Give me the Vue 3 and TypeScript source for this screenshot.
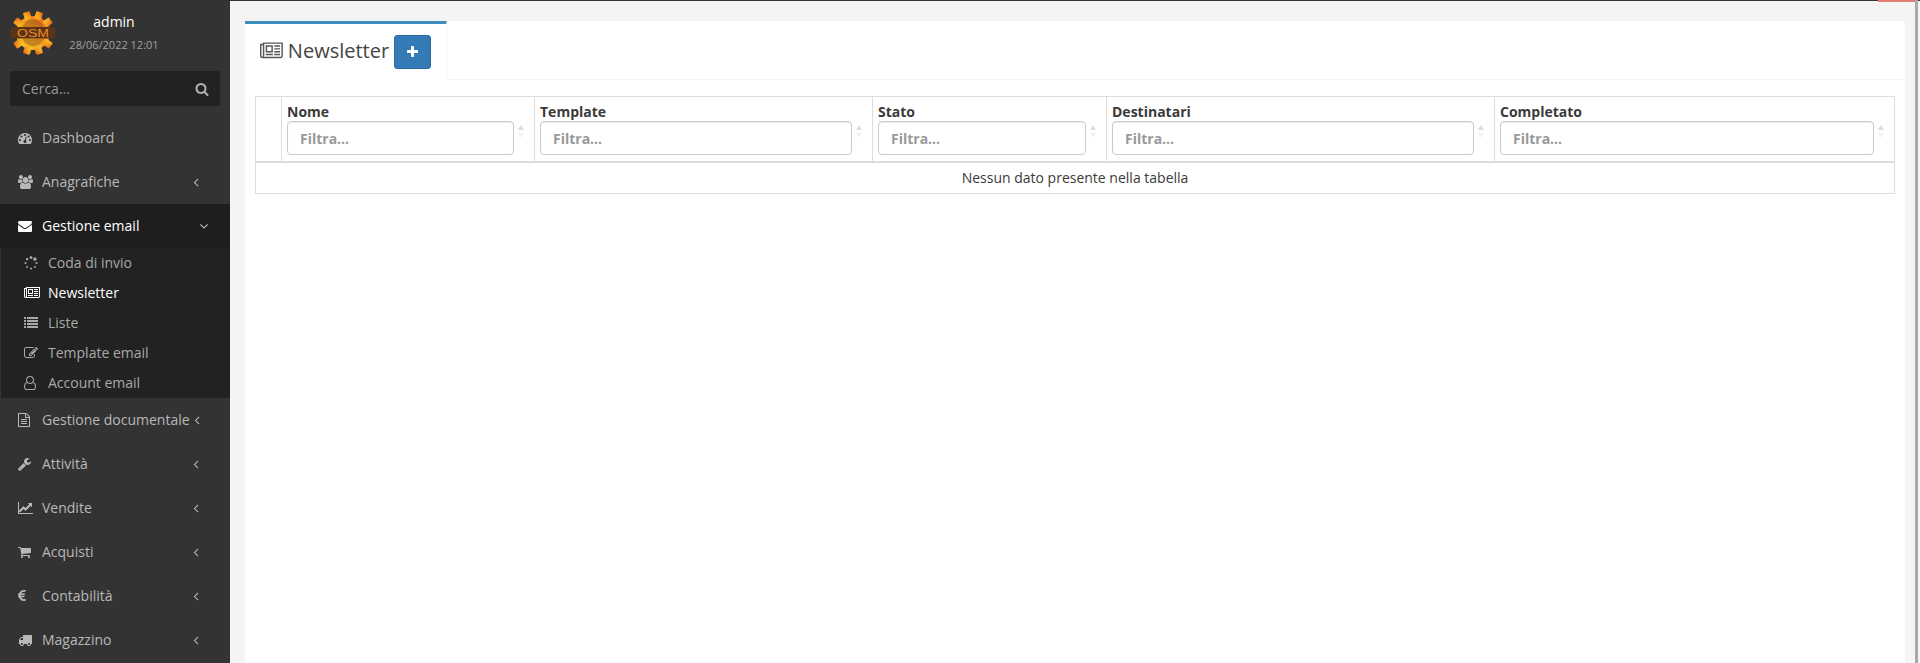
<script setup lang="ts">
interface Glyph { w: number; x?: number; d: string }

const icons: Record<string, Glyph> = {
  search: { w: 1792, d: 'M1216 832q0-185-131.5-316.5t-316.5-131.5-316.5 131.5-131.5 316.5 131.5 316.5 316.5 131.5 316.5-131.5 131.5-316.5zm512 832q0 52-38 90t-90 38q-54 0-90-38l-343-342q-179 124-399 124-143 0-273.5-55.5t-225-150-150-225-55.5-273.5 55.5-273.5 150-225 225-150 273.5-55.5 273.5 55.5 225 150 150 225 55.5 273.5q0 220-124 399l343 343q37 37 37 90z' },
  dashboard: { w: 1792, d: 'M384 1152q0-53-37.5-90.5t-90.5-37.5-90.5 37.5-37.5 90.5 37.5 90.5 90.5 37.5 90.5-37.5 37.5-90.5zm192-448q0-53-37.5-90.5t-90.5-37.5-90.5 37.5-37.5 90.5 37.5 90.5 90.5 37.5 90.5-37.5 37.5-90.5zm428 481l101-382q6-26-7.5-48.5t-38.5-29.5-48 6.5-30 39.5l-101 382q-60 5-107 43.5t-63 98.5q-20 77 20 146t117 89 146-20 89-117q16-60-6-117t-72-91zm660-33q0-53-37.5-90.5t-90.5-37.5-90.5 37.5-37.5 90.5 37.5 90.5 90.5 37.5 90.5-37.5 37.5-90.5zm-640-640q0-53-37.5-90.5t-90.5-37.5-90.5 37.5-37.5 90.5 37.5 90.5 90.5 37.5 90.5-37.5 37.5-90.5zm448 192q0-53-37.5-90.5t-90.5-37.5-90.5 37.5-37.5 90.5 37.5 90.5 90.5 37.5 90.5-37.5 37.5-90.5zm320 448q0 261-141 483-19 29-54 29h-1402q-35 0-54-29-141-221-141-483 0-182 71-348t191-286 286-191 348-71 348 71 286 191 191 286 71 348z' },
  users: { w: 1920, d: 'M593 896q-162 5-265 128h-134q-82 0-138-40.5t-56-118.5q0-353 124-353 6 0 43.5 21t97.5 42.5 119 21.5q67 0 133-23-5 37-5 66 0 139 81 256zm1071 637q0 120-73 189.5t-194 69.5h-874q-121 0-194-69.5t-73-189.5q0-53 3.5-103.5t14-109 26.5-108.5 43-97.5 62-81 85.5-53.5 111.5-20q10 0 43 21.5t73 48 107 48 135 21.5 135-21.5 107-48 73-48 43-21.5q61 0 111.5 20t85.5 53.5 62 81 43 97.5 26.5 108.5 14 109 3.5 103.5zm-1024-1277q0 106-75 181t-181 75-181-75-75-181 75-181 181-75 181 75 75 181zm704 384q0 159-112.5 271.5t-271.5 112.5-271.5-112.5-112.5-271.5 112.5-271.5 271.5-112.5 271.5 112.5 112.5 271.5zm576 225q0 78-56 118.5t-138 40.5h-134q-103-123-265-128 81-117 81-256 0-29-5-66 66 23 133 23 59 0 119-21.5t97.5-42.5 43.5-21q124 0 124 353zm-128-609q0 106-75 181t-181 75-181-75-75-181 75-181 181-75 181 75 75 181z' },
  envelope: { w: 1792, d: 'M1792 710v794q0 66-47 113t-113 47h-1472q-66 0-113-47t-47-113v-794q44 49 101 87 362 246 497 345 57 42 92.5 65.5t94.5 48 110 24.5h2q51 0 110-24.5t94.5-48 92.5-65.5q170-123 498-345 57-39 100-87zm0-294q0 79-49 151t-122 123q-376 261-468 325-10 7-42.5 30.5t-54 38-52 32.5-57.5 27-50 9h-2q-23 0-50-9t-57.5-27-52-32.5-54-38-42.5-30.5q-91-64-262-182.5t-205-142.5q-62-42-117-115.5t-55-136.5q0-78 41.5-130t118.5-52h1472q65 0 112.5 47t47.5 113z' },
  spinner: { w: 1792, d: 'M526 1394q0 53-37.5 90.5t-90.5 37.5q-52 0-90-38t-38-90q0-53 37.5-90.5t90.5-37.5 90.5 37.5 37.5 90.5zm498 206q0 53-37.5 90.5t-90.5 37.5-90.5-37.5-37.5-90.5 37.5-90.5 90.5-37.5 90.5 37.5 37.5 90.5zm-704-704q0 53-37.5 90.5t-90.5 37.5-90.5-37.5-37.5-90.5 37.5-90.5 90.5-37.5 90.5 37.5 37.5 90.5zm1202 498q0 52-38 90t-90 38q-53 0-90.5-37.5t-37.5-90.5 37.5-90.5 90.5-37.5 90.5 37.5 37.5 90.5zm-964-996q0 66-47 113t-113 47-113-47-47-113 47-113 113-47 113 47 47 113zm1170 498q0 53-37.5 90.5t-90.5 37.5-90.5-37.5-37.5-90.5 37.5-90.5 90.5-37.5 90.5 37.5 37.5 90.5zm-640-704q0 80-56 136t-136 56-136-56-56-136 56-136 136-56 136 56 56 136zm530 206q0 93-66 158.5t-158 65.5q-93 0-158.5-65.5t-65.5-158.5q0-92 65.5-158t158.5-66q92 0 158 66t66 158z' },
  newspaper: { w: 2048, d: 'M1024 512h-384v384h384v-384zm128 640v128h-640v-128h640zm0-768v640h-640v-640h640zm640 768v128h-512v-128h512zm0-256v128h-512v-128h512zm0-256v128h-512v-128h512zm0-256v128h-512v-128h512zm-1536 960v-960h-128v960q0 26 19 45t45 19 45-19 19-45zm1664 0v-1088h-1536v1088q0 33-11 64h1483q26 0 45-19t19-45zm128-1216v1216q0 80-56 136t-136 56h-1664q-80 0-136-56t-56-136v-1088h256v-128h1792z' },
  list: { w: 1792, d: 'M256 1312v192q0 13-9.5 22.5t-22.5 9.5h-192q-13 0-22.5-9.5t-9.5-22.5v-192q0-13 9.5-22.5t22.5-9.5h192q13 0 22.5 9.5t9.5 22.5zm0-384v192q0 13-9.5 22.5t-22.5 9.5h-192q-13 0-22.5-9.5t-9.5-22.5v-192q0-13 9.5-22.5t22.5-9.5h192q13 0 22.5 9.5t9.5 22.5zm0-384v192q0 13-9.5 22.5t-22.5 9.5h-192q-13 0-22.5-9.5t-9.5-22.5v-192q0-13 9.5-22.5t22.5-9.5h192q13 0 22.5 9.5t9.5 22.5zm1536 768v192q0 13-9.5 22.5t-22.5 9.5h-1344q-13 0-22.5-9.5t-9.5-22.5v-192q0-13 9.5-22.5t22.5-9.5h1344q13 0 22.5 9.5t9.5 22.5zm-1536-1152v192q0 13-9.5 22.5t-22.5 9.5h-192q-13 0-22.5-9.5t-9.5-22.5v-192q0-13 9.5-22.5t22.5-9.5h192q13 0 22.5 9.5t9.5 22.5zm1536 768v192q0 13-9.5 22.5t-22.5 9.5h-1344q-13 0-22.5-9.5t-9.5-22.5v-192q0-13 9.5-22.5t22.5-9.5h1344q13 0 22.5 9.5t9.5 22.5zm0-384v192q0 13-9.5 22.5t-22.5 9.5h-1344q-13 0-22.5-9.5t-9.5-22.5v-192q0-13 9.5-22.5t22.5-9.5h1344q13 0 22.5 9.5t9.5 22.5zm0-384v192q0 13-9.5 22.5t-22.5 9.5h-1344q-13 0-22.5-9.5t-9.5-22.5v-192q0-13 9.5-22.5t22.5-9.5h1344q13 0 22.5 9.5t9.5 22.5z' },
  edit: { w: 1792, d: 'M888 1184l116-116-152-152-116 116v56h96v96h56zm440-720q-16-16-33 1l-350 350q-17 17-1 33t33-1l350-350q17-17 1-33zm80 594v190q0 119-84.5 203.5t-203.5 84.5h-832q-119 0-203.5-84.5t-84.5-203.5v-832q0-119 84.5-203.5t203.5-84.5h832q63 0 117 25 15 7 18 23 3 17-9 29l-49 49q-14 14-32 8-23-6-45-6h-832q-66 0-113 47t-47 113v832q0 66 47 113t113 47h832q66 0 113-47t47-113v-126q0-13 9-22l64-64q15-15 35-7t20 29zm-96-738l288 288-672 672h-288v-288zm444 132l-92 92-288-288 92-92q28-28 68-28t68 28l152 152q28 28 28 68t-28 68z' },
  userO: { w: 1536, d: 'M1201 784q47 14 89.5 38t89 73 79.5 115.5 55 172 22 236.5q0 154-100 263.5t-241 109.5h-854q-141 0-241-109.5t-100-263.5q0-131 22-236.5t55-172 79.5-115.5 89-73 89.5-38q-79-125-79-272 0-104 40.5-198.5t109.5-163.5 163.5-109.5 198.5-40.5 198.5 40.5 163.5 109.5 109.5 163.5 40.5 198.5q0 147-79 272zm-433-656q-159 0-271.5 112.5t-112.5 271.5 112.5 271.5 271.5 112.5 271.5-112.5 112.5-271.5-112.5-271.5-271.5-112.5zm427 1536q88 0 150.5-71.5t62.5-173.5q0-239-78.5-377t-225.5-145q-145 127-336 127t-336-127q-147 7-225.5 145t-78.5 377q0 102 62.5 173.5t150.5 71.5h854z' },
  file: { w: 1536, x: 128, d: 'M1596 380q28 28 48 76t20 88v1152q0 40-28 68t-68 28h-1344q-40 0-68-28t-28-68v-1600q0-40 28-68t68-28h896q40 0 88 20t76 48zm-444-244v376h376q-10-29-22-41l-313-313q-12-12-41-22zm384 1528v-1024h-416q-40 0-68-28t-28-68v-416h-768v1536h1280zm-1024-864q0-14 9-23t23-9h704q14 0 23 9t9 23v64q0 14-9 23t-23 9h-704q-14 0-23-9t-9-23v-64zm736 224q14 0 23 9t9 23v64q0 14-9 23t-23 9h-704q-14 0-23-9t-9-23v-64q0-14 9-23t23-9h704zm0 256q14 0 23 9t9 23v64q0 14-9 23t-23 9h-704q-14 0-23-9t-9-23v-64q0-14 9-23t23-9h704z' },
  wrench: { w: 1664, x: 64, d: 'M448 1472q0-26-19-45t-45-19-45 19-19 45 19 45 45 19 45-19 19-45zm644-420l-682 682q-37 37-90 37-52 0-91-37l-106-108q-38-36-38-90 0-53 38-91l681-681q39 98 114.5 173.5t173.5 114.5zm634-435q0 39-23 106-47 134-164.5 217.5t-258.5 83.5q-185 0-316.5-131.5t-131.5-316.5 131.5-316.5 316.5-131.5q58 0 121.5 16.5t107.5 46.5q16 11 16 28t-16 28l-293 169v224l193 107q5-3 79-48.5t135.5-81 70.5-35.5q15 0 23.5 10t8.5 25z' },
  chart: { w: 2048, d: 'M1920 1536v128h-1920v-1536h128v1408h1792zm-128-1248v435q0 21-19.5 29.5t-35.5-7.5l-121-121-633 633q-10 10-23 10t-23-10l-233-233-416 416-192-192 585-585q10-10 23-10t23 10l233 233 464-464-121-121q-16-16-7.5-35.5t29.5-19.5h435q14 0 23 9t9 23z' },
  cart: { w: 1664, x: 64, d: 'M704 1536q0 52-38 90t-90 38-90-38-38-90 38-90 90-38 90 38 38 90zm896 0q0 52-38 90t-90 38-90-38-38-90 38-90 90-38 90 38 38 90zm128-1088v512q0 24-16.5 42.5t-40.5 21.5l-1044 122q13 60 13 70 0 16-24 64h920q26 0 45 19t19 45-19 45-45 19h-1024q-26 0-45-19t-19-45q0-11 8-31.5t16-36 21.5-40 15.5-29.5l-177-823h-204q-26 0-45-19t-19-45 19-45 45-19h256q16 0 28.5 6.5t19.5 15.5 13 24.5 8 26 5.5 29.5 4.5 26h1201q26 0 45 19t19 45z' },
  euro: { w: 1024, d: 'M976 1297l35 159q3 12-3 22.5t-17 14.5l-5 1q-4 2-10.5 3.5t-16 4.5-21.5 5.5-25.5 5-30 5-33.5 4.5-36.5 3-38.5 1q-234 0-409-130.5t-238-351.5h-95q-13 0-22.5-9.5t-9.5-22.5v-113q0-13 9.5-22.5t22.5-9.5h66q-2-57 1-105h-67q-14 0-23-9t-9-23v-114q0-14 9-23t23-9h98q67-210 243.5-338t400.5-128q102 0 194 23 11 3 20 15 6 11 3 24l-43 159q-3 13-14 19.5t-24 2.5l-4-1q-4-1-11.5-2.5l-17.5-3.5-22.5-3.5-26-3-29-2.5-29.5-1q-126 0-226 64t-150 176h468q16 0 25 12 10 12 7 26l-24 114q-5 26-32 26h-488q-3 37 0 105h459q15 0 25 12 9 12 6 27l-24 112q-2 11-11 18.5t-20 7.5h-387q48 117 149.5 185.5t228.5 68.5q18 0 36-1.5t33.5-3.5 29.5-4.5 24.5-5 18.5-4.5l12-3 5-2q13-5 26 2 12 7 15 21z' },
  truck: { w: 1792, d: 'M640 1408q0-52-38-90t-90-38-90 38-38 90 38 90 90 38 90-38 38-90zm-384-512h384v-256h-158q-13 0-22 9l-195 195q-9 9-9 22v30zm1280 512q0-52-38-90t-90-38-90 38-38 90 38 90 90 38 90-38 38-90zm256-1088v1024q0 15-4 26.5t-13.5 18.5-16.5 11.5-23.5 6-22.5 2-25.5 0-22.5-.5q0 106-75 181t-181 75-181-75-75-181h-384q0 106-75 181t-181 75-181-75-75-181h-64q-3 0-22.5.5t-25.5 0-22.5-2-23.5-6-16.5-11.5-13.5-18.5-4-26.5q0-26 19-45t45-19v-320q0-8-.5-35t0-38 2.5-34.5 6.5-37 14-30.5 22.5-30l198-198q19-19 50.5-32t58.5-13h160v-192q0-26 19-45t45-19h1024q26 0 45 19t19 45z' },
  plus: { w: 1408, d: 'M1408 736v192q0 40-28 68t-68 28h-416v416q0 40-28 68t-68 28h-192q-40 0-68-28t-28-68v-416h-416q-40 0-68-28t-28-68v-192q0-40 28-68t68-28h416v-416q0-40 28-68t68-28h192q40 0 68 28t28 68v416h416q40 0 68 28t28 68z' },
  angleLeft: { w: 1792, d: 'M1203 544q0 13-10 23l-393 393 393 393q10 10 10 23t-10 23l-50 50q-10 10-23 10t-23-10l-466-466q-10-10-10-23t10-23l466-466q10-10 23-10t23 10l50 50q10 10 10 23z' },
  angleDown: { w: 1792, d: 'M1395 736q0 13-10 23l-466 466q-10 10-23 10t-23-10l-466-466q-10-10-10-23t10-23l50-50q10-10 23-10t23 10l393 393 393-393q10-10 23-10t23 10l50 50q10 10 10 23z' },
}

const box = (name: string) => `${icons[name].x ?? 0} 0 ${icons[name].w} 1792`

const teeth = Array.from({ length: 10 }, (_, i) => i * 36 + 18)

const menuBefore = [
  { icon: 'dashboard', label: 'Dashboard', arrow: false },
  { icon: 'users', label: 'Anagrafiche', arrow: true },
]
const submenu = [
  { icon: 'spinner', label: 'Coda di invio', current: false },
  { icon: 'newspaper', label: 'Newsletter', current: true },
  { icon: 'list', label: 'Liste', current: false },
  { icon: 'edit', label: 'Template email', current: false },
  { icon: 'userO', label: 'Account email', current: false },
]
const menuAfter = [
  { icon: 'file', label: 'Gestione documentale' },
  { icon: 'wrench', label: 'Attività' },
  { icon: 'chart', label: 'Vendite' },
  { icon: 'cart', label: 'Acquisti' },
  { icon: 'euro', label: 'Contabilità' },
  { icon: 'truck', label: 'Magazzino' },
]

const columns = [
  { title: '', width: 26, filter: false },
  { title: 'Nome', width: 253, filter: true },
  { title: 'Template', width: 338, filter: true },
  { title: 'Stato', width: 234, filter: true },
  { title: 'Destinatari', width: 388, filter: true },
  { title: 'Completato', width: 400, filter: true },
]
</script>

<template>
  <div class="page">
    <div class="topline"><span class="topline-red"></span></div>
    <div class="layout">
      <aside class="sidebar">
        <div class="user-panel">
          <svg class="logo" viewBox="0 0 46 46" aria-label="OSM">
            <defs>
              <linearGradient id="gearFill" x1="0" y1="1" x2="1" y2="0">
                <stop offset="0" stop-color="#fbc726" />
                <stop offset="0.55" stop-color="#f59a1e" />
                <stop offset="1" stop-color="#e4581c" />
              </linearGradient>
            </defs>
            <g fill="url(#gearFill)">
              <circle cx="23" cy="23" r="17" />
              <rect
                v-for="angle in teeth"
                :key="angle"
                x="19.5"
                y="1"
                width="7"
                height="7.5"
                rx="1"
                :transform="`rotate(${angle} 23 23)`"
              />
            </g>
            <rect x="1" y="17" width="44" height="11.5" rx="3" fill="#5c3516" />
            <path d="M12.5 17a11 11 0 0 1 21 0zM12.5 28.5a11 11 0 0 0 21 0z" fill="#6b3f18" opacity="0.35" />
            <text x="23" y="26.5" class="logo-text" text-anchor="middle" textLength="32" lengthAdjust="spacingAndGlyphs">OSM</text>
          </svg>
          <div class="user-info">
            <div class="user-name">admin</div>
            <div class="user-date">28/06/2022 12:01</div>
          </div>
        </div>

        <form class="search" @submit.prevent>
          <input class="search-input" type="text" placeholder="Cerca..." />
          <svg class="search-icon" :viewBox="box('search')"><path :d="icons.search.d" /></svg>
        </form>

        <ul class="menu">
          <li v-for="item in menuBefore" :key="item.label" class="menu-row">
            <span class="menu-icon"><svg :viewBox="box(item.icon)"><path :d="icons[item.icon].d" /></svg></span>
            <span class="menu-label">{{ item.label }}</span>
            <svg v-if="item.arrow" class="menu-arrow" :viewBox="box('angleLeft')"><path :d="icons.angleLeft.d" /></svg>
          </li>
          <li class="menu-row menu-row-active">
            <span class="menu-icon"><svg :viewBox="box('envelope')"><path :d="icons.envelope.d" /></svg></span>
            <span class="menu-label">Gestione email</span>
            <svg class="menu-arrow menu-arrow-down" :viewBox="box('angleDown')"><path :d="icons.angleDown.d" /></svg>
          </li>
          <li class="submenu-wrap">
            <ul class="submenu">
              <li v-for="sub in submenu" :key="sub.label" class="submenu-row" :class="{ 'submenu-current': sub.current }">
                <span class="submenu-icon"><svg :viewBox="box(sub.icon)"><path :d="icons[sub.icon].d" /></svg></span>
                <span>{{ sub.label }}</span>
              </li>
            </ul>
          </li>
          <li v-for="item in menuAfter" :key="item.label" class="menu-row">
            <span class="menu-icon"><svg :viewBox="box(item.icon)"><path :d="icons[item.icon].d" /></svg></span>
            <span class="menu-label">{{ item.label }}</span>
            <svg class="menu-arrow" :viewBox="box('angleLeft')"><path :d="icons.angleLeft.d" /></svg>
          </li>
        </ul>
      </aside>

      <main class="content">
        <section class="panel">
          <header class="tabs">
            <div class="tab">
              <svg class="tab-icon" :viewBox="box('newspaper')"><path :d="icons.newspaper.d" /></svg>
              <h1 class="tab-title">Newsletter</h1>
              <button class="add-btn" type="button" aria-label="Aggiungi">
                <svg :viewBox="box('plus')"><path :d="icons.plus.d" /></svg>
              </button>
            </div>
          </header>
          <div class="panel-body">
            <table class="grid">
              <colgroup>
                <col v-for="c in columns" :key="c.title" :style="{ width: c.width + 'px' }" />
              </colgroup>
              <thead>
                <tr>
                  <th v-for="c in columns" :key="c.title" :class="{ sortable: c.filter }">
                    <template v-if="c.filter">
                      <div class="th-title">{{ c.title }}</div>
                      <input class="filter" type="text" placeholder="Filtra..." />
                    </template>
                  </th>
                </tr>
              </thead>
              <tbody>
                <tr>
                  <td colspan="6" class="empty">Nessun dato presente nella tabella</td>
                </tr>
              </tbody>
            </table>
          </div>
        </section>
      </main>
      <div class="scrollbar"></div>
    </div>
  </div>
</template>

<style>
html, body {
  margin: 0;
  height: 100%;
  overflow: hidden;
  background: #f4f4f4;
}
</style>

<style scoped>
.page {
  width: 1920px;
  height: 663px;
  display: flex;
  flex-direction: column;
  overflow: hidden;
  font-family: "Open Sans", "Liberation Sans", sans-serif;
  font-size: 14px;
  line-height: 20px;
  color: #3a3a3a;
  background: #f4f4f4;
}
.topline {
  height: 1px;
  flex: none;
  background: #333;
  display: flex;
  justify-content: flex-end;
  padding-right: 5px;
}
.topline-red {
  width: 37px;
  height: 2px;
  background: #e27f70;
  position: relative;
  z-index: 1;
}
.layout {
  flex: 1;
  display: flex;
  min-height: 0;
}
.sidebar {
  width: 230px;
  flex: none;
  background: #333;
  overflow: hidden;
}
.user-panel {
  display: flex;
  height: 70px;
  padding: 9px 0 0 10px;
  box-sizing: border-box;
}
.logo {
  width: 46px;
  height: 46px;
  flex: none;
}
.logo-text {
  font-family: "Liberation Sans", sans-serif;
  font-size: 10.5px;
  fill: #ee8a2c;
}
.user-info {
  width: 116px;
  text-align: center;
}
.user-name {
  color: #fff;
  margin-top: 2px;
}
.user-date {
  color: #a0a0a0;
  font-size: 11px;
  line-height: 16px;
  margin-top: 5px;
}
.search {
  margin: 0 10px;
  height: 35px;
  background: #222;
  border-radius: 3px;
  display: flex;
  align-items: center;
  padding: 0 11px 0 12px;
}
.search-input {
  flex: 1;
  min-width: 0;
  background: transparent;
  border: 0;
  outline: 0;
  padding: 0;
  font: inherit;
  color: #ccc;
}
.search-input::placeholder {
  color: #999;
  opacity: 1;
}
.search-icon {
  width: 14px;
  height: 14px;
  fill: #b0b0b0;
}
.menu, .submenu {
  list-style: none;
  margin: 0;
  padding: 0;
}
.menu {
  margin-top: 10px;
}
.menu-row {
  height: 44px;
  display: flex;
  align-items: center;
  padding-left: 18px;
  color: #b8b8b8;
  white-space: nowrap;
  position: relative;
}
.menu-row-active {
  background: #1e1e1e;
  color: #fff;
}
.menu-icon {
  width: 24px;
  flex: none;
  display: flex;
}
.menu-icon svg {
  height: 14px;
  fill: currentColor;
}
.menu-label {
  flex: 1;
}
.menu-arrow {
  width: 14px;
  height: 14px;
  fill: currentColor;
  margin-right: 27px;
  flex: none;
}
.menu-arrow-down {
  margin-right: 19px;
  fill: #c8c8c8;
}
.submenu-wrap {
  background: #222;
  margin-left: 1px;
}
.submenu-row {
  height: 30px;
  display: flex;
  align-items: center;
  padding-left: 23px;
  color: #a9a9a9;
}
.submenu-current {
  color: #fff;
}
.submenu-icon {
  width: 24px;
  flex: none;
  display: flex;
}
.submenu-icon svg {
  height: 14px;
  fill: currentColor;
}
.content {
  flex: 1;
  min-width: 0;
  padding: 20px 10px 0 15px;
  display: flex;
}
.panel {
  flex: 1;
  background: #fff;
  border-radius: 3px 3px 0 0;
  display: flex;
  flex-direction: column;
  min-width: 0;
}
.tabs {
  height: 58px;
  border-bottom: 1px solid #f4f4f4;
  display: flex;
  flex: none;
}
.tab {
  width: 202px;
  height: 59px;
  box-sizing: border-box;
  border-top: 3px solid #3c8dbc;
  border-right: 1px solid #f4f4f4;
  background: #fff;
  padding-left: 15px;
  display: flex;
  align-items: center;
}
.tab-icon {
  height: 20px;
  fill: #555;
  flex: none;
  margin-bottom: 3px;
}
.tab-title {
  margin: 0 5px 3px;
  font-size: 20px;
  line-height: 24px;
  font-weight: 400;
  color: #444;
}
.add-btn {
  width: 37px;
  height: 34px;
  padding: 0;
  box-sizing: border-box;
  border: 1px solid #2e6da4;
  border-radius: 3px;
  background: #337ab7;
  display: flex;
  align-items: center;
  justify-content: center;
}
.add-btn svg {
  width: 11px;
  height: 14px;
  fill: #fff;
}
.panel-body {
  padding: 16px 10px 0 10px;
}
.grid {
  width: 1639px;
  border-collapse: collapse;
  table-layout: fixed;
}
th {
  position: relative;
  border: 1px solid #ddd;
  border-bottom-width: 2px;
  padding: 5px 20px 6px 5px;
  text-align: left;
  font-weight: 700;
}
.th-title {
  line-height: 20px;
  margin-bottom: -1px;
}
.sortable::before,
.sortable::after {
  content: "";
  position: absolute;
  right: 10px;
  border-left: 3.5px solid transparent;
  border-right: 3.5px solid transparent;
}
.sortable::before {
  top: 28px;
  border-bottom: 5px solid #ddd;
}
.sortable::after {
  top: 36px;
  border-top: 5px solid #f1f1f1;
}
.filter {
  display: block;
  width: 100%;
  height: 34px;
  box-sizing: border-box;
  border: 1px solid #ccc;
  border-radius: 4px;
  padding: 6px 12px;
  font: inherit;
  font-weight: 700;
  color: #555;
  background: #fff;
  box-shadow: inset 0 1px 1px rgba(0, 0, 0, 0.075);
  outline: 0;
}
.filter::placeholder {
  color: #999;
  opacity: 1;
}
.empty {
  border: 1px solid #ddd;
  padding: 5px;
  text-align: center;
  height: 20px;
}
.scrollbar {
  width: 3px;
  flex: none;
  margin-right: 2px;
  background: #a9a9a9;
  margin-top: -1px;
}
</style>
